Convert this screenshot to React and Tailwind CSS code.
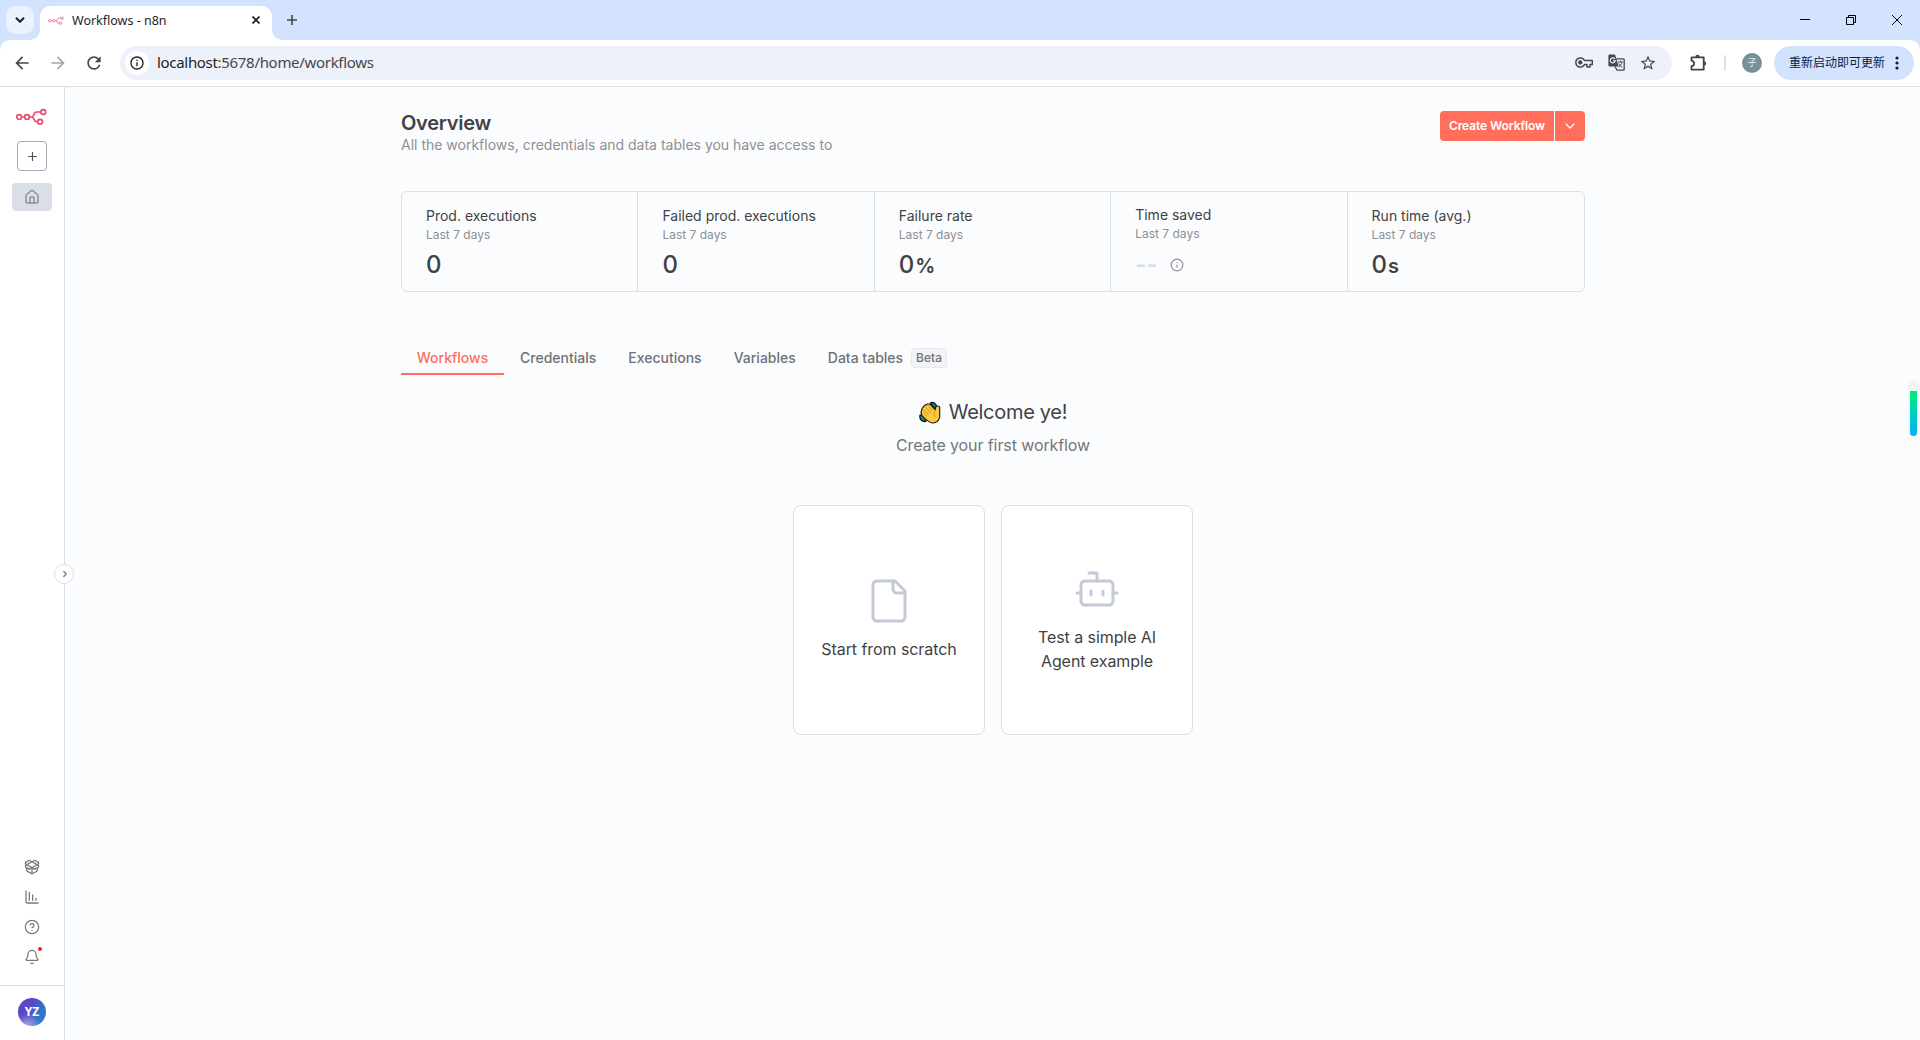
import React from "react";
import { House, Bell, ChevronDown, ChevronRight, CircleHelp, Bot, Info } from "lucide-react";
import { MdArrowBack, MdArrowForward, MdRefresh, MdOutlineInfo, MdStarOutline } from "react-icons/md";

function Logo({ className, color }) {
  return (
    <svg className={className} viewBox="0 0 31 17" fill="none" stroke={color} strokeWidth="1.7">
      <circle cx="3.2" cy="9" r="2.4" />
      <circle cx="11" cy="9" r="2.4" />
      <circle cx="27.3" cy="4" r="2.4" />
      <circle cx="24.1" cy="13.7" r="2.4" />
      <path d="M5.6 9h3M13.4 9h2.4c2.4 0 1.6-5 4.8-5h4.3M15.8 9c3 0 1.6 4.7 4.4 4.7h1.5" />
    </svg>
  );
}

function BrowserTabs() {
  return (
    <div className="h-10 shrink-0 bg-[#d3e3fd] flex items-end">
      <div className="ml-1.5 mb-1.5 size-7 rounded-[10px] bg-[#ebf2fe] flex items-center justify-center">
        <svg viewBox="0 0 10 6" className="w-2.5 h-1.5" fill="none" stroke="#1f1f1f" strokeWidth="2"><path d="M1 .8 5 4.8 9 .8" /></svg>
      </div>
      <svg className="ml-[-4px] w-2.5 h-2.5" viewBox="0 0 10 10"><path d="M10 0v10H0A10 10 0 0 0 10 0" fill="#fff" /></svg>
      <div className="w-[232px] h-[34px] rounded-t-[10px] bg-white flex items-center pl-2 pr-3 pb-1.5">
        <Logo className="w-4 h-[9px]" color="#ef6d8b" />
        <span className="ml-2 text-[12.5px] text-[#1f1f1f] leading-4 pt-0.5">Workflows - n8n</span>
        <svg className="ml-auto size-2" viewBox="0 0 8 8" stroke="#1f1f1f" strokeWidth="1.7"><path d="M.5.5l7 7M7.500.5l-7 7" /></svg>
      </div>
      <svg className="w-2.5 h-2.5" viewBox="0 0 10 10"><path d="M0 0v10h10A10 10 0 0 1 0 0" fill="#fff" /></svg>
      <svg className="ml-[5px] mb-[15px] size-2.5" viewBox="0 0 10 10" stroke="#474747" strokeWidth="1.6"><path d="M5 0v10M0 5h10" /></svg>
      <div className="ml-auto mb-[15px] mr-[18px] flex items-center gap-9">
        <svg className="w-2.5 h-2.5" viewBox="0 0 10 10" stroke="#000"><path d="M0 4.5h10" /></svg>
        <svg className="w-2.5 h-2.5" viewBox="0 0 10 10" stroke="#000" fill="none"><path d="M.5 2.5h7v7h-7zM2.5 2.5v-2h7v7h-2" /></svg>
        <svg className="w-2.5 h-2.5" viewBox="0 0 10 10" stroke="#000"><path d="M0 0l10 10M10 0L0 10" /></svg>
      </div>
    </div>
  );
}

function Toolbar() {
  return (
    <div className="bg-[#d3e3fd] shrink-0">
      <div className="h-[47px] bg-white rounded-t-[10px] border-b border-[#dfe1de] flex items-center pb-px pr-1.5 text-[#474747]">
        <MdArrowBack className="ml-3 size-5" />
        <MdArrowForward className="ml-4 size-5 text-[#a8a8a8]" />
        <MdRefresh className="ml-4 size-5" />
        <div className="ml-4 w-[1552px] h-[34px] rounded-full bg-[#ecf1fa] flex items-center pl-[5px] pr-[15px]">
          <span className="size-6 rounded-full bg-white flex items-center justify-center">
            <MdOutlineInfo className="size-4 text-[#1f1f1f]" />
          </span>
          <span className="ml-2 text-[15px] tracking-[-0.31px] text-[#474747]"><span className="text-[#1f1f1f]">localhost</span>:5678/home/workflows</span>
          <svg className="ml-auto w-[18px] h-[11px]" viewBox="0 0 18 11" fill="none" stroke="#474747" strokeWidth="1.5">
            <path d="M9.5 3.4A4.6 4.6 0 1 0 9.5 7.6H12V10h3V7.6h2.3V3.4Z" strokeLinejoin="round" />
            <circle cx="5.3" cy="5.5" r="1.4" fill="#474747" />
          </svg>
          <svg className="ml-[15px] size-[17px]" viewBox="0 0 17 17">
            <path d="M7 4.8h8.2a1 1 0 0 1 1 1v9.4a1 1 0 0 1-1 1H9L7 12.5" fill="none" stroke="#474747" strokeWidth="1.3" />
            <path d="M1.6.5H7l3.6 12H1.6A1.2 1.2 0 0 1 .4 11.3V1.7A1.2 1.2 0 0 1 1.6.5Z" fill="#474747" />
            <path d="M6.8 4.9A2.5 2.5 0 1 0 7.3 6.7H5" fill="none" stroke="#fff" strokeWidth="1.1" />
            <path d="M9.8 8h5M12.3 6.7V8M14 8c-.5 2.300-1.800 4-3.500 5M10.6 9.5c.8 1.700 2 3 3.700 4" fill="none" stroke="#474747" strokeWidth="1" />
          </svg>
          <MdStarOutline className="ml-3.5 size-[18px]" />
        </div>
        <svg className="ml-[17px] w-[18px] h-[18px]" viewBox="0 0 18 18">
          <path d="M2.5 3.3H14.7V15.6H2.5V12.2C6 11.5 6 7.4 2.5 6.7Z" fill="none" stroke="#474747" strokeWidth="1.8" strokeLinejoin="round" />
          <path d="M6.3 3a2.2 2.2 0 0 1 4.4 0ZM15 7.2a2.2 2.2 0 0 1 0 4.4Z" fill="#474747" />
        </svg>
        <div className="ml-[17px] w-0.5 h-4 bg-[#d3e3fd] rounded" />
        <div className="ml-4 size-5 rounded-full bg-[#78909c] text-[#e6ecee] text-[9px] flex items-center justify-center">子</div>
        <div className="ml-auto w-[140px] h-[34px] rounded-full bg-[#d3e3fd] flex items-center pl-[15px] text-[12px] text-[#041e49]">
          <span className="whitespace-nowrap">重新启动即可更新</span>
          <svg className="ml-2.5 w-1 h-3.5" viewBox="0 0 4 14" fill="#041e49"><circle cx="2" cy="2" r="1.6" /><circle cx="2" cy="7" r="1.6" /><circle cx="2" cy="12" r="1.6" /></svg>
        </div>
      </div>
    </div>
  );
}

function PackageOpen() {
  return (
    <svg className="size-4" viewBox="0 0 24 24" fill="none" stroke="currentColor" strokeWidth="2" strokeLinecap="round" strokeLinejoin="round">
      <path d="M12 22v-9" />
      <path d="M15.17 2.21a1.67 1.67 0 0 1 1.63 0L21 4.57a1.93 1.93 0 0 1 0 3.36L8.82 14.79a1.655 1.655 0 0 1-1.64 0L3 12.43a1.93 1.93 0 0 1 0-3.36z" />
      <path d="M20 13v3.87a2.06 2.06 0 0 1-1.11 1.83l-6 3.08a1.93 1.93 0 0 1-1.78 0l-6-3.08A2.06 2.06 0 0 1 4 16.87V13" />
      <path d="M21 12.43a1.93 1.93 0 0 0 0-3.36L8.83 2.2a1.64 1.64 0 0 0-1.63 0L3 4.57a1.93 1.93 0 0 0 0 3.36l12.18 6.86a1.636 1.636 0 0 0 1.63 0z" />
    </svg>
  );
}

function ChartIcon() {
  return (
    <svg className="mt-3.5 size-4" viewBox="0 0 24 24" fill="none" stroke="currentColor" strokeWidth="1.9" strokeLinecap="round" strokeLinejoin="round">
      <path d="M3 3v16a2 2 0 0 0 2 2h16M8 17V5M13 17V9M18 17v-3" />
    </svg>
  );
}

function FileIcon() {
  return (
    <svg className="mt-[71px] size-12 text-[#c3c9d7]" viewBox="0 0 24 24" fill="none" stroke="currentColor" strokeWidth="1.5" strokeLinecap="round" strokeLinejoin="round">
      <path d="M15 2H6a2 2 0 0 0-2 2v16a2 2 0 0 0 2 2h12a2 2 0 0 0 2-2V7Z" />
      <path d="M14 2v4a2 2 0 0 0 2 2h4" />
    </svg>
  );
}

function Sidebar() {
  return (
    <div className="relative w-[65px] shrink-0 border-r border-[#d9dee8] bg-white flex flex-col items-center text-[#75777d]">
      <Logo className="mt-[21px] mr-0.5 w-[31px] h-[17px]" color="#ea4b71" />
      <div className="mt-4 size-[30px] rounded border border-[#a4a9b6] flex items-center justify-center text-[#555]">
        <svg className="size-[9px]" viewBox="0 0 9 9" stroke="currentColor" strokeWidth="1.2"><path d="M4.5 0v9M0 4.5h9" /></svg>
      </div>
      <div className="mt-3 w-10 h-7 rounded bg-[#d9dee8] flex items-center justify-center">
        <House className="size-4" strokeWidth={1.7} />
      </div>
      <div className="mt-auto mb-5 flex flex-col items-center">
        <PackageOpen />
        <ChartIcon />
        <CircleHelp className="mt-3.5 size-4" strokeWidth={1.8} />
        <div className="relative mt-3.5">
          <Bell className="size-4" strokeWidth={1.8} />
          <span className="absolute -top-0.5 left-3.5 size-1 rounded-full bg-[#ee2222]" />
        </div>
      </div>
      <div className="w-full h-[55px] border-t border-[#d9dee8] flex justify-center pt-3">
        <div className="size-7 rounded-full bg-[radial-gradient(circle_at_35%_100%,#a9a6e8_0%,transparent_38%),linear-gradient(115deg,#5a49c4_40%,#2f78cc_75%)] text-white text-[12px] font-bold flex items-center justify-center font-['Open_Sans']">YZ</div>
      </div>
      <div className="absolute left-[54px] top-[477px] size-5 rounded-full border border-[#d9dee8] bg-white flex items-center justify-center">
        <ChevronRight className="size-2.5 ml-px" strokeWidth={3} />
      </div>
    </div>
  );
}

const stats = [
  { title: "Prod. executions", value: "0" },
  { title: "Failed prod. executions", value: "0" },
  { title: "Failure rate", value: "0", unit: "%" },
  { title: "Time saved" },
  { title: "Run time (avg.)", value: "0", unit: "s" },
];

function Stat({ title, value, unit }) {
  return (
    <div className={value ? "px-6 pt-[17px]" : "px-6 pt-4"}>
      <div className="text-[14px] leading-[14px] text-[#414244]">{title}</div>
      <div className="mt-1.5 text-[12px] leading-3 text-[#8d9095]">Last 7 days</div>
      {value ? (
        <div className="mt-3 h-6 flex items-baseline text-[24px] leading-6 font-medium text-[#414244]">
          {value}
          {unit && <span className="ml-px text-[20px] font-semibold">{unit}</span>}
        </div>
      ) : (
        <div className="mt-[13px] h-6 flex items-center text-[24px] font-semibold text-[#d9dee8]">
          <span>--</span>
          <Info className="ml-3 size-3.5 text-[#8d9095]" />
        </div>
      )}
    </div>
  );
}

function Wave() {
  return (
    <svg className="w-[22px] h-[23px]" viewBox="0 0 22 23" strokeLinecap="round" strokeLinejoin="round">
      <path d="M11.5 2C13.500.2 17.800 2.500 17.600 6.500L14 6ZM1 14c-1 4 2 7.200 6 6.500L5 15Z" fill="#1b7f95" stroke="#111" strokeWidth="1.2" />
      <path d="M2.600 9.500 3 7.500 5.200 4.800 8.200 3 11 3l5.200 5.500.6-2.700c.6-1.300 3.300-1 3.900.4v9.800c-.6 3.500-3.500 6.200-7.200 6C9.500 21.500 6 18 3 14.500L2 12Z" fill="#ffc83d" stroke="#111" strokeWidth="1.1" />
      <path d="m4.300 8.500 5.200 5.200M6.300 6.200l5.500 5.500M9 4.700l5 5M4.300 12l3 3M16.500 9.500c-2 2-1.700 4.500-.4 6" stroke="#b58a1e" fill="none" strokeWidth=".8" />
    </svg>
  );
}

export default function App() {
  return (
    <div className="w-[1920px] h-[1040px] overflow-hidden flex flex-col bg-white font-['Noto_Sans','Noto_Sans_CJK_SC',sans-serif]">
      <BrowserTabs />
      <Toolbar />
      <div className="relative flex-1 flex min-h-0 font-['Inter',sans-serif]">
        <Sidebar />
        <main className="flex-1 bg-[#fbfcfe]">
          <div className="ml-[336px] w-[1184px]">
            <header className="pt-6 flex justify-between items-start">
              <div>
                <h1 className="text-[20px] leading-6 font-semibold tracking-[-0.25px] text-[#414244]">Overview</h1>
                <p className="mt-px text-[14px] leading-[18px] text-[#8d9095]">All the workflows, credentials and data tables you have access to</p>
              </div>
              <div className="h-[30px] flex gap-px text-white text-[12px] font-semibold">
                <button className="w-[114px] rounded-l bg-[#ff6f5c] whitespace-nowrap tracking-[-0.08px]">Create Workflow</button>
                <button className="w-[30px] rounded-r bg-[#ff6f5c] flex items-center justify-center"><ChevronDown className="size-4" strokeWidth={1.8} /></button>
              </div>
            </header>
            <section className="mt-[37px] h-[101px] grid grid-cols-5 rounded-md border border-[#d9dee8] divide-x divide-[#d9dee8]">
              {stats.map((s) => <Stat key={s.title} {...s} />)}
            </section>
            <nav className="mt-[49px] h-[34px] flex text-[14px] leading-5 font-medium text-[#6f7177]">
              <div className="w-[103px] pt-[7px] text-center border-b-2 border-[#ff6f5c] text-[#ff6f5c]">Workflows</div>
              <div className="pl-4 pt-[7px]">Credentials</div>
              <div className="pl-8 pt-[7px]">Executions</div>
              <div className="pl-8 pt-[7px]">Variables</div>
              <div className="pl-8 pt-[7px]">Data tables</div>
              <div className="ml-2 mt-[7px] h-5 px-1 rounded-sm border border-[#e6e9f1] bg-[#f2f3f9] text-[12px] leading-[18px]">Beta</div>
            </nav>
            <div className="mt-6 flex flex-col items-center">
              <h2 className="flex items-center gap-2 text-[20px] leading-[26px] tracking-[-0.3px] text-[#414244]"><Wave />Welcome ye!</h2>
              <p className="mt-[9px] text-[16px] leading-[22px] tracking-[-0.1px] text-[#757779]">Create your first workflow</p>
              <div className="mt-[49px] flex gap-4 text-[16px] leading-6 tracking-[-0.07px] text-[#414244] text-center">
                <div className="w-48 h-[230px] rounded-lg border border-[#d9dee8] bg-white flex flex-col items-center">
                  <FileIcon />
                  <span className="mt-3">Start from scratch</span>
                </div>
                <div className="w-48 h-[230px] rounded-lg border border-[#d9dee8] bg-white flex flex-col items-center">
                  <Bot className="mt-[59px] size-12 text-[#c3c9d7]" strokeWidth={1.5} />
                  <span className="mt-3 w-[140px]">Test a simple AI Agent example</span>
                </div>
              </div>
            </div>
          </div>
        </main>
        <div className="absolute right-[3px] top-[294px] w-[7px] h-[55px] rounded-full overflow-hidden bg-[#f3f3f4] shadow-[0_0_5px_rgba(0,0,0,0.08)] flex items-end">
          <div className="w-full h-[45px] bg-linear-to-b from-[#00ee76] to-[#1caaf8]" />
        </div>
      </div>
    </div>
  );
}
